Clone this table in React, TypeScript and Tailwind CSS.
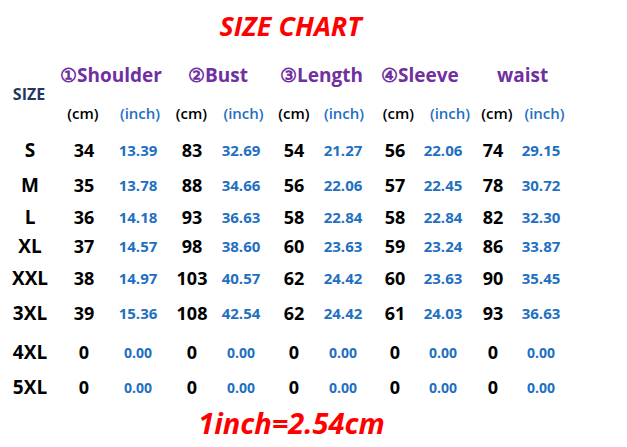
const font = { fontFamily: '"Open Sans", "Liberation Sans", sans-serif' };

const rows = [
  { size: 'S', h: 'h-[34px]', v: ['34', '13.39', '83', '32.69', '54', '21.27', '56', '22.06', '74', '29.15'] },
  { size: 'M', h: 'h-[36px]', v: ['35', '13.78', '88', '34.66', '56', '22.06', '57', '22.45', '78', '30.72'] },
  { size: 'L', h: 'h-[28px]', v: ['36', '14.18', '93', '36.63', '58', '22.84', '58', '22.84', '82', '32.30'] },
  { size: 'XL', h: 'h-[31px]', v: ['37', '14.57', '98', '38.60', '60', '23.63', '59', '23.24', '86', '33.87'] },
  { size: 'XXL', h: 'h-[32px]', v: ['38', '14.97', '103', '40.57', '62', '24.42', '60', '23.63', '90', '35.45'] },
  { size: '3XL', h: 'h-[39px]', v: ['39', '15.36', '108', '42.54', '62', '24.42', '61', '24.03', '93', '36.63'] },
  { size: '4XL', h: 'h-[38px]', v: ['0', '0.00', '0', '0.00', '0', '0.00', '0', '0.00', '0', '0.00'] },
  { size: '5XL', h: 'h-[32px]', v: ['0', '0.00', '0', '0.00', '0', '0.00', '0', '0.00', '0', '0.00'] },
];

const labels = ['①Shoulder', '②Bust', '③Length', '④Sleeve', 'waist'];

export default function App() {
  return (
    <div className="w-[627px] h-[447px] bg-white overflow-hidden" style={font}>
      <div className="h-12 flex items-center justify-center pr-[46px] pt-[2px]">
        <h1 className="text-[27px] font-bold italic text-[#ff0000] leading-none">SIZE CHART</h1>
      </div>

      <div className="flex">
        <div className="w-[60px] flex items-center justify-center pt-[14px] pr-[2px]">
          <span className="text-[16px] font-bold text-[#1f3864]">SIZE</span>
        </div>
        <div className="flex flex-col">
          <div className="h-[52px] grid grid-cols-[128px_92px_101px_116px_80px] items-center pt-[2px]">
            {labels.map((l) => (
              <span key={l} className="text-[19px] font-bold text-[#7030a0] whitespace-nowrap">
                {l}
              </span>
            ))}
          </div>
          <div className="h-[26px] grid grid-cols-[46px_68px_35px_69px_32px_68px_41px_62px_32px_63px] items-center text-[15px] font-semibold">
            {Array.from({ length: 10 }).map((_, i) => (
              <div key={i} className="flex justify-center">
                <span className={i % 2 === 0 ? 'text-black' : 'text-[#1f70c1]'}>
                  {i % 2 === 0 ? '(cm)' : '(inch)'}
                </span>
              </div>
            ))}
          </div>
        </div>
      </div>

      <div className="mt-[7px]">
        {rows.map((r) => (
          <div
            key={r.size}
            className={`${r.h} grid grid-cols-[60px_48px_60px_48px_50px_56px_42px_62px_34px_66px_30px] items-center`}
          >
            <div className="flex justify-center">
              <span className="text-[19px] font-bold text-black whitespace-nowrap">{r.size}</span>
            </div>
            {r.v.map((v, i) => (
              <div key={i} className="flex justify-center">
                {i % 2 === 0 ? (
                  <span className="text-[18px] font-bold text-black">{v}</span>
                ) : (
                  <span className={`${v === '0.00' ? 'text-[14px]' : 'text-[15px]'} font-bold text-[#1f70c1]`}>{v}</span>
                )}
              </div>
            ))}
          </div>
        ))}
      </div>

      <div className="h-[38px] flex items-center justify-center pr-[44px]">
        <p className="text-[29px] font-bold italic text-[#ff0000] leading-none">1inch=2.54cm</p>
      </div>
    </div>
  );
}
